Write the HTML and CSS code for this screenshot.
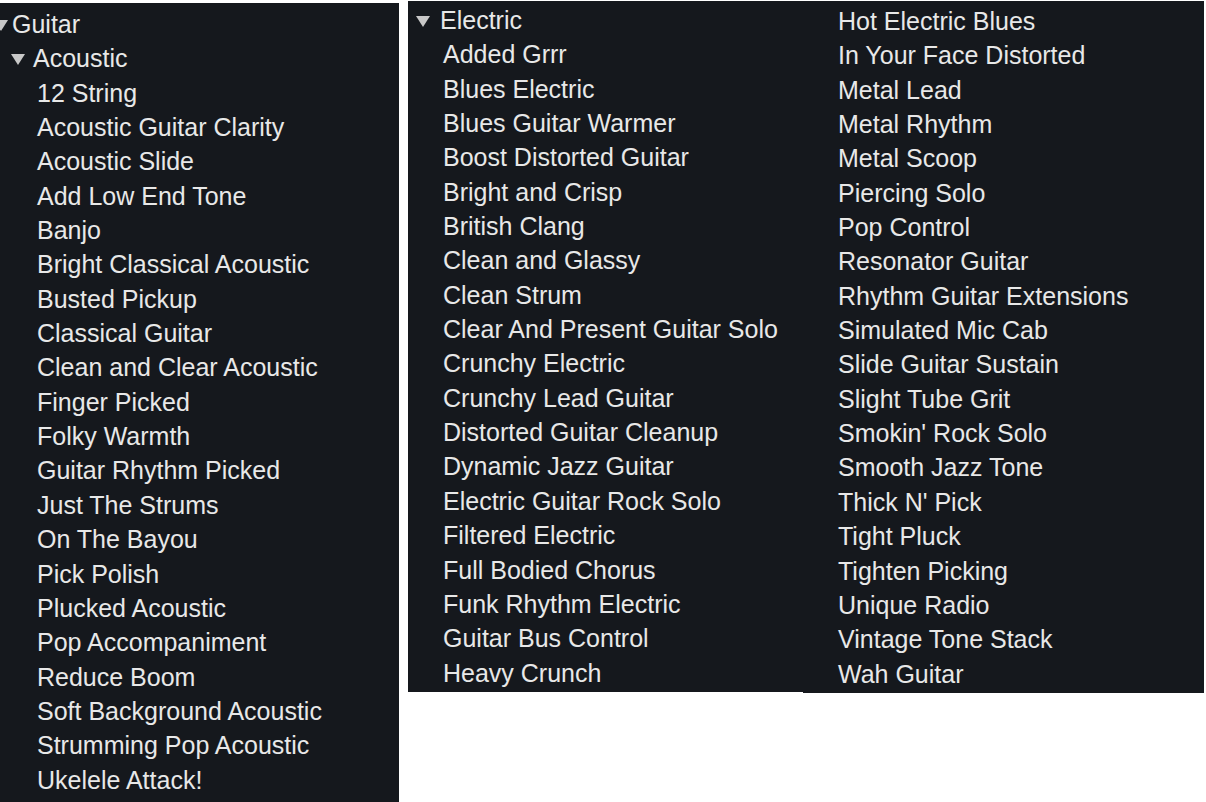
FILE: index.html
```html
<!DOCTYPE html>
<html lang="en">
<head>
<meta charset="UTF-8">
<meta name="viewport" content="width=device-width, initial-scale=1.0">
<title>Guitar Presets</title>
<link rel="stylesheet" href="styles.css">
</head>
<body>
    <div class="sheet">
        <!-- first column: Guitar > Acoustic -->
        <div class="panel panel-acoustic">
            <div class="head head-top"><span class="caret"></span>Guitar</div>
            <div class="head head-sub"><span class="caret"></span>Acoustic</div>
            <ul class="items">
                <li>12 String</li>
                <li>Acoustic Guitar Clarity</li>
                <li>Acoustic Slide</li>
                <li>Add Low End Tone</li>
                <li>Banjo</li>
                <li>Bright Classical Acoustic</li>
                <li>Busted Pickup</li>
                <li>Classical Guitar</li>
                <li>Clean and Clear Acoustic</li>
                <li>Finger Picked</li>
                <li>Folky Warmth</li>
                <li>Guitar Rhythm Picked</li>
                <li>Just The Strums</li>
                <li>On The Bayou</li>
                <li>Pick Polish</li>
                <li>Plucked Acoustic</li>
                <li>Pop Accompaniment</li>
                <li>Reduce Boom</li>
                <li>Soft Background Acoustic</li>
                <li>Strumming Pop Acoustic</li>
                <li>Ukelele Attack!</li>
            </ul>
        </div>

        <!-- second column: Electric -->
        <div class="panel panel-electric">
            <div class="head head-electric"><span class="caret"></span>Electric</div>
            <ul class="items">
                <li>Added Grrr</li>
                <li>Blues Electric</li>
                <li>Blues Guitar Warmer</li>
                <li>Boost Distorted Guitar</li>
                <li>Bright and Crisp</li>
                <li>British Clang</li>
                <li>Clean and Glassy</li>
                <li>Clean Strum</li>
                <li>Clear And Present Guitar Solo</li>
                <li>Crunchy Electric</li>
                <li>Crunchy Lead Guitar</li>
                <li>Distorted Guitar Cleanup</li>
                <li>Dynamic Jazz Guitar</li>
                <li>Electric Guitar Rock Solo</li>
                <li>Filtered Electric</li>
                <li>Full Bodied Chorus</li>
                <li>Funk Rhythm Electric</li>
                <li>Guitar Bus Control</li>
                <li>Heavy Crunch</li>
            </ul>
        </div>

        <!-- third column: Electric continued -->
        <div class="panel panel-more">
            <ul class="items">
                <li>Hot Electric Blues</li>
                <li>In Your Face Distorted</li>
                <li>Metal Lead</li>
                <li>Metal Rhythm</li>
                <li>Metal Scoop</li>
                <li>Piercing Solo</li>
                <li>Pop Control</li>
                <li>Resonator Guitar</li>
                <li>Rhythm Guitar Extensions</li>
                <li>Simulated Mic Cab</li>
                <li>Slide Guitar Sustain</li>
                <li>Slight Tube Grit</li>
                <li>Smokin' Rock Solo</li>
                <li>Smooth Jazz Tone</li>
                <li>Thick N' Pick</li>
                <li>Tight Pluck</li>
                <li>Tighten Picking</li>
                <li>Unique Radio</li>
                <li>Vintage Tone Stack</li>
                <li>Wah Guitar</li>
            </ul>
        </div>
    </div>
</body>
</html>
```

FILE: styles.css
```css
body {
    margin: 0;
    padding: 0;
    background-color: #fff;
    font-family: 'Liberation Sans', Arial, sans-serif;
    font-size: 25px;
    line-height: 34.35px;
    color: #e8e8e8;
    overflow: hidden;
}

.sheet {
    display: flex;
    align-items: flex-start;
    height: 802px;
    overflow: hidden;
}

.panel {
    background-color: #15181d;
    box-sizing: border-box;
    overflow: hidden;
}

.panel-acoustic {
    width: 399px;
    height: 799px;
    margin-top: 3px;
    padding-top: 4px;
}

.panel-electric {
    width: 395px;
    height: 691px;
    margin-top: 1px;
    margin-left: 9px;
    padding-top: 2px;
}

.panel-more {
    width: 401px;
    height: 692px;
    margin-top: 1px;
    padding-top: 3px;
}

.head {
    display: flex;
    align-items: center;
    white-space: nowrap;
}

.caret {
    flex: none;
    width: 0;
    height: 0;
    margin-top: 2px;
    border-left: 7px solid transparent;
    border-right: 7px solid transparent;
    border-top: 11px solid #c8c8c8;
}

.head-top {
    margin-left: -6px;
}

.head-top .caret {
    margin-right: 4px;
}

.head-sub {
    padding-left: 11px;
}

.head-sub .caret {
    margin-right: 8px;
}

.head-electric {
    padding-left: 8px;
}

.head-electric .caret {
    margin-right: 10px;
}

.items {
    list-style: none;
    margin: 0;
    padding: 0 0 0 35px;
}

.panel-acoustic .items {
    padding-left: 37px;
}

.items li {
    white-space: nowrap;
}
```
